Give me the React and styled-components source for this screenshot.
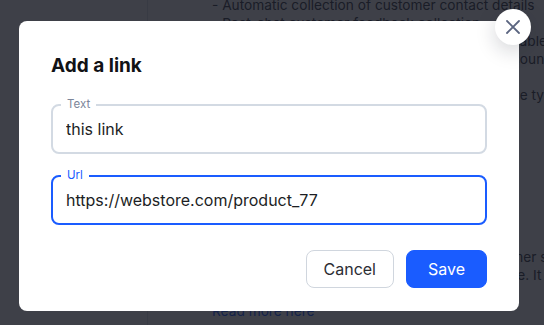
import React from "react";
import styled, { createGlobalStyle } from "styled-components";

const GlobalStyle = createGlobalStyle`
  html, body { margin: 0; padding: 0; }
  body {
    width: 544px;
    height: 325px;
    overflow: hidden;
    font-family: "Inter", "Noto Sans", sans-serif;
    background: #ffffff;
  }
  * { box-sizing: border-box; }
`;

const Page = styled.div`
  display: flex;
  width: 544px;
  height: 325px;
  overflow: hidden;
  background: #ffffff;
`;

const Sidebar = styled.aside`
  width: 148px;
  flex-shrink: 0;
  border-right: 1px solid #dfe2e8;
  background: #ffffff;
`;

const Content = styled.main`
  flex: 1;
  padding-left: 64px;
  margin-top: -4px;
  font-size: 13.7px;
  line-height: 18px;
  color: #3a3d4a;
  white-space: nowrap;
`;

const Line = styled.div`
  height: 18px;
`;

const Link = styled.a`
  color: #1a5cff;
  text-decoration: none;
`;

const Overlay = styled.div`
  position: fixed;
  inset: 0;
  background: rgba(20, 22, 32, 0.82);
  padding: 21px 0 0 19px;
`;

const Modal = styled.div`
  position: relative;
  width: 500px;
  height: 290px;
  background: #ffffff;
  border-radius: 8px;
  padding: 33px 32px 0 32px;
  display: flex;
  flex-direction: column;
`;

const CloseButton = styled.button`
  position: absolute;
  top: -12px;
  right: -12px;
  width: 36px;
  height: 36px;
  border-radius: 50%;
  border: none;
  background: #ffffff;
  box-shadow: 0 6px 20px rgba(15, 20, 40, 0.18);
  display: flex;
  align-items: center;
  justify-content: center;
  padding: 0;
  cursor: pointer;
`;

const Title = styled.h2`
  margin: 0 0 26px 0;
  font-size: 19px;
  line-height: 24px;
  font-weight: 700;
  color: #111216;
`;

const Fields = styled.div`
  display: flex;
  flex-direction: column;
  gap: 21px;
`;

const Field = styled.label`
  position: relative;
  display: flex;
  align-items: center;
  height: 50px;
  border: 2px solid ${(p) => (p.$active ? "#1a5cff" : "#d3dae3")};
  border-radius: 8px;
  padding: 0 13px;
`;

const FieldLabel = styled.span`
  position: absolute;
  top: -9px;
  left: 8px;
  padding: 0 6px;
  background: #ffffff;
  font-size: 11.5px;
  line-height: 14px;
  color: ${(p) => (p.$active ? "#1a5cff" : "#7c869a")};
`;

const Input = styled.input`
  width: 100%;
  border: none;
  outline: none;
  padding: 0;
  font-family: inherit;
  font-size: 16px;
  color: #1c1e24;
  background: transparent;
  caret-color: #111;
`;

const Actions = styled.div`
  display: flex;
  justify-content: flex-end;
  gap: 12px;
  margin-top: 25px;
`;

const Button = styled.button`
  height: 38px;
  padding: 0 ${(p) => (p.$primary ? "21px" : "17px")};
  border-radius: 8px;
  font-family: inherit;
  font-size: 16px;
  cursor: pointer;
  border: 1px solid ${(p) => (p.$primary ? "#1a5cff" : "#d0d6de")};
  background: ${(p) => (p.$primary ? "#1a5cff" : "#ffffff")};
  color: ${(p) => (p.$primary ? "#ffffff" : "#2b2d33")};
`;

export default function App() {
  const urlRef = React.useRef(null);
  React.useEffect(() => {
    const el = urlRef.current;
    if (el) {
      el.focus();
      const n = el.value.length;
      el.setSelectionRange(n, n);
    }
  }, []);

  return (
    <>
      <GlobalStyle />
      <Page>
        <Sidebar />
        <Content>
          <Line>- Automatic collection of customer contact details</Line>
          <Line>- Post-chat customer feedback collection</Line>
          <Line>- Chat transcripts plus full history are downloadable</Line>
          <Line>- Full access to all chat features within your account</Line>
          <Line />
          <Line>- Choose the chat plan that best fits your service type</Line>
          <Line>- Setup in minutes</Line>
          <Line />
          <Line />
          <Line />
          <Line />
          <Line />
          <Line />
          <Line />
          <Line>- Our team will help you to deliver better customer support</Line>
          <Line>and it can improve your overall client experience. It</Line>
          <Line />
          <Line>
            <Link href="#">Read more here</Link>
          </Line>
        </Content>
      </Page>
      <Overlay>
        <Modal role="dialog" aria-label="Add a link">
          <CloseButton aria-label="Close">
            <svg width="14" height="14" viewBox="0 0 14 14" fill="none">
              <path
                d="M1 1L13 13M13 1L1 13"
                stroke="#5b6580"
                strokeWidth="1.8"
                strokeLinecap="round"
              />
            </svg>
          </CloseButton>
          <Title>Add a link</Title>
          <Fields>
            <Field>
              <FieldLabel>Text</FieldLabel>
              <Input defaultValue="this link" />
            </Field>
            <Field $active>
              <FieldLabel $active>Url</FieldLabel>
              <Input ref={urlRef} defaultValue="https://webstore.com/product_77" />
            </Field>
          </Fields>
          <Actions>
            <Button>Cancel</Button>
            <Button $primary>Save</Button>
          </Actions>
        </Modal>
      </Overlay>
    </>
  );
}
